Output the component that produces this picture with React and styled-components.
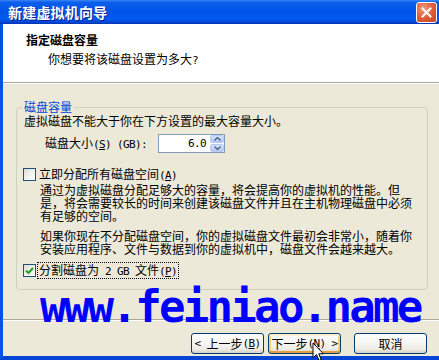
import React from 'react';
import styled, { createGlobalStyle } from 'styled-components';

const Global = createGlobalStyle`
  html, body { margin: 0; padding: 0; background: #ECE9D8; }
  body {
    width: 439px; height: 360px; overflow: hidden;
    font-family: "Noto Sans CJK SC", "Liberation Sans", sans-serif;
    font-size: 12px; color: #000;
  }
  * { box-sizing: border-box; }
`;

const Window = styled.div`
  position: relative;
  width: 439px;
  height: 360px;
  display: flex;
  flex-direction: column;
  overflow: hidden;
`;

const TitleBar = styled.div`
  flex: none;
  height: 24px;
  display: flex;
  align-items: center;
  justify-content: space-between;
  padding: 0 2px 0 8px;
  background: linear-gradient(to bottom, #3C86F7 0%, #0C5FEC 10%, #0054E6 45%, #0059EF 78%, #0349D8 92%, #0030AE 100%);
`;

const TitleText = styled.span`
  color: #fff;
  font-weight: bold;
  font-size: 14px;
  letter-spacing: 0.2px;
  text-shadow: 1px 1px 0 #0A1E8C;
`;

const CloseButton = styled.div`
  width: 21px;
  height: 21px;
  border: 1px solid #fff;
  border-radius: 3px;
  background: radial-gradient(circle at 35% 30%, #F29C80 0%, #E2633F 45%, #C6421B 100%);
  display: flex;
  align-items: center;
  justify-content: center;
`;

const Client = styled.div`
  flex: 1;
  display: flex;
  flex-direction: column;
  border-left: 3px solid #0553E4;
  border-bottom: 4px solid #0544D6;
  background: #ECE9D8;
`;

const Header = styled.div`
  flex: none;
  height: 58px;
  background: #fff;
  padding: 9px 0 0 23px;
`;

const HeaderTitle = styled.div`
  font-weight: bold;
  line-height: 14px;
`;

const HeaderSubtitle = styled.div`
  margin-top: 5px;
  padding-left: 22px;
  line-height: 14px;
`;

const Etch = styled.div`
  flex: none;
  height: 0;
  border-top: 1px solid #ACA899;
  border-bottom: 1px solid #fff;
  margin-top: ${p => p.$top || 0}px;
`;

const Body = styled.div`
  flex: 1;
  display: flex;
  flex-direction: column;
  padding-top: 16px;
`;

const Group = styled.fieldset`
  margin: 0 11px 0 13px;
  padding: 0 8px 10px 7px;
  border: 1px solid #D0D0BF;
  border-radius: 4px;
  min-width: 0;
`;

const GroupLabel = styled.legend`
  padding: 0 2px;
  margin-left: -2px;
  color: #0046D5;
  line-height: 14px;
`;

const Latin = styled.span`
  font-family: "DejaVu Sans Mono", "Liberation Mono", monospace;
  font-size: 11px;
  letter-spacing: -0.62px;
`;

const Line = styled.div`
  line-height: 13px;
  white-space: nowrap;
`;

const SizeRow = styled.div`
  display: flex;
  align-items: center;
  margin-top: 7px;
  padding-left: 21px;
`;

const SizeLabel = styled.span`
  width: 113px;
  line-height: 13px;
  white-space: pre;
`;

const SpinField = styled.div`
  display: flex;
  width: 67px;
  height: 19px;
  border: 1px solid #7F9DB9;
  background: #fff;
`;

const SpinValue = styled.div`
  flex: 1;
  text-align: right;
  padding-right: 3px;
  line-height: 17px;
  font-family: "DejaVu Sans Mono", "Liberation Mono", monospace;
  font-size: 11px;
  letter-spacing: -0.62px;
`;

const SpinButtons = styled.div`
  width: 15px;
  display: flex;
  flex-direction: column;
  gap: 1px;
  padding: 0 0 0 1px;
`;

const SpinBtn = styled.div`
  flex: 1;
  border-radius: 2px;
  background: linear-gradient(to bottom, #D3E0FD, #B2C8F6);
  border: 1px solid #B7C9F2;
  display: flex;
  align-items: center;
  justify-content: center;
`;

const CheckRow = styled.div`
  display: flex;
  align-items: center;
  gap: ${p => (p.$focus ? 1 : 3)}px;
  margin-top: ${p => p.$top}px;
  margin-left: -1px;
`;

const Box = styled.span`
  flex: none;
  width: 13px;
  height: 13px;
  border: 1px solid #1C5180;
  background: linear-gradient(135deg, #DCDCD7 0%, #F5F5F2 60%, #fff 100%);
  display: flex;
  align-items: center;
  justify-content: center;
`;

const CheckText = styled.span`
  line-height: 13px;
  white-space: pre;
  padding: 0 1px;
  border: 1px ${p => (p.$focus ? 'dotted #000' : 'solid transparent')};
  margin-left: ${p => (p.$focus ? 0 : -2)}px;
`;

const Para = styled.div`
  padding-left: 16px;
  margin-top: ${p => p.$top}px;
`;

const ButtonRow = styled.div`
  display: flex;
  justify-content: flex-end;
  margin-top: 12px;
  padding-right: 12px;
`;

const Button = styled.div`
  width: 73px;
  height: 21px;
  margin-left: ${p => p.$gap}px;
  border: 1px solid #003C74;
  border-radius: 3px;
  background: linear-gradient(to bottom, #FFFFFF 0%, #F5F4EF 50%, #ECEBE4 80%, #D6D0C5 100%);
  box-shadow: ${p => (p.$hot ? 'inset 0 2px 0 #FFF0CF, inset 0 -2px 0 #E5A03B, inset 2px 0 0 #F9CE74, inset -2px 0 0 #F9CE74' : 'none')};
  display: flex;
  align-items: center;
  justify-content: center;
  line-height: 13px;
  white-space: pre;
`;

const Watermark = styled.div`
  position: absolute;
  left: 40px;
  top: 285px;
  font-family: "DejaVu Sans Mono", "Liberation Mono", monospace;
  font-weight: bold;
  font-size: 44px;
  line-height: 44px;
  letter-spacing: -2.7px;
  color: #0000FF;
  white-space: nowrap;
  pointer-events: none;
`;

const Cursor = styled.svg`
  position: absolute;
  left: 312px;
  top: 342px;
`;

const Check = () => (
  <svg width="9" height="8" viewBox="0 0 9 8">
    <path d="M1 3.5 L3.5 6 L8 1" fill="none" stroke="#21A121" strokeWidth="2" />
  </svg>
);

const Arrow = ({ up }) => (
  <svg width="7" height="4" viewBox="0 0 7 4">
    <path d={up ? 'M0.5 3.5 L3.5 0.5 L6.5 3.5' : 'M0.5 0.5 L3.5 3.5 L6.5 0.5'} fill="none" stroke="#4D6185" strokeWidth="1.4" />
  </svg>
);

export default function App() {
  return (
    <>
      <Global />
      <Window>
        <TitleBar>
          <TitleText>新建虚拟机向导</TitleText>
          <CloseButton>
            <svg width="11" height="11" viewBox="0 0 11 11">
              <path d="M1.5 1.5 L9.5 9.5 M9.5 1.5 L1.5 9.5" stroke="#fff" strokeWidth="2" strokeLinecap="square" />
            </svg>
          </CloseButton>
        </TitleBar>
        <Client>
          <Header>
            <HeaderTitle>指定磁盘容量</HeaderTitle>
            <HeaderSubtitle>你想要将该磁盘设置为多大<Latin>?</Latin></HeaderSubtitle>
          </Header>
          <Etch />
          <Body>
            <Group>
              <GroupLabel>磁盘容量</GroupLabel>
              <Line>虚拟磁盘不能大于你在下方设置的最大容量大小。</Line>
              <SizeRow>
                <SizeLabel>磁盘大小<Latin>(<u>S</u>) (GB):</Latin></SizeLabel>
                <SpinField>
                  <SpinValue>6.0</SpinValue>
                  <SpinButtons>
                    <SpinBtn><Arrow up /></SpinBtn>
                    <SpinBtn><Arrow /></SpinBtn>
                  </SpinButtons>
                </SpinField>
              </SizeRow>
              <CheckRow $top={13}>
                <Box />
                <CheckText>立即分配所有磁盘空间<Latin>(<u>A</u>)</Latin></CheckText>
              </CheckRow>
              <Para $top={0}>
                <Line>通过为虚拟磁盘分配足够大的容量，将会提高你的虚拟机的性能。但</Line>
                <Line>是，将会需要较长的时间来创建该磁盘文件并且在主机物理磁盘中必须</Line>
                <Line>有足够的空间。</Line>
              </Para>
              <Para $top={7}>
                <Line>如果你现在不分配磁盘空间，你的虚拟磁盘文件最初会非常小，随着你</Line>
                <Line>安装应用程序、文件与数据到你的虚拟机中，磁盘文件会越来越大。</Line>
              </Para>
              <CheckRow $top={7} $focus>
                <Box><Check /></Box>
                <CheckText $focus>分割磁盘为<Latin> 2 GB </Latin>文件<Latin>(<u>P</u>)</Latin></CheckText>
              </CheckRow>
            </Group>
            <Etch $top={29} />
            <ButtonRow>
              <Button $gap={0}><Latin>&lt; </Latin>上一步<Latin>(<u>B</u>)</Latin></Button>
              <Button $gap={4} $hot>下一步<Latin>(<u>N</u>) &gt;</Latin></Button>
              <Button $gap={13}>取消</Button>
            </ButtonRow>
          </Body>
        </Client>
        <Watermark>www.feiniao.name</Watermark>
        <Cursor width="13" height="20" viewBox="0 0 13 20">
          <path d="M1 1 L1 16 L4.5 12.5 L7 18.5 L9.2 17.6 L6.8 11.8 L11.5 11.8 Z" fill="#fff" stroke="#000" strokeWidth="1" strokeLinejoin="miter" />
        </Cursor>
      </Window>
    </>
  );
}
